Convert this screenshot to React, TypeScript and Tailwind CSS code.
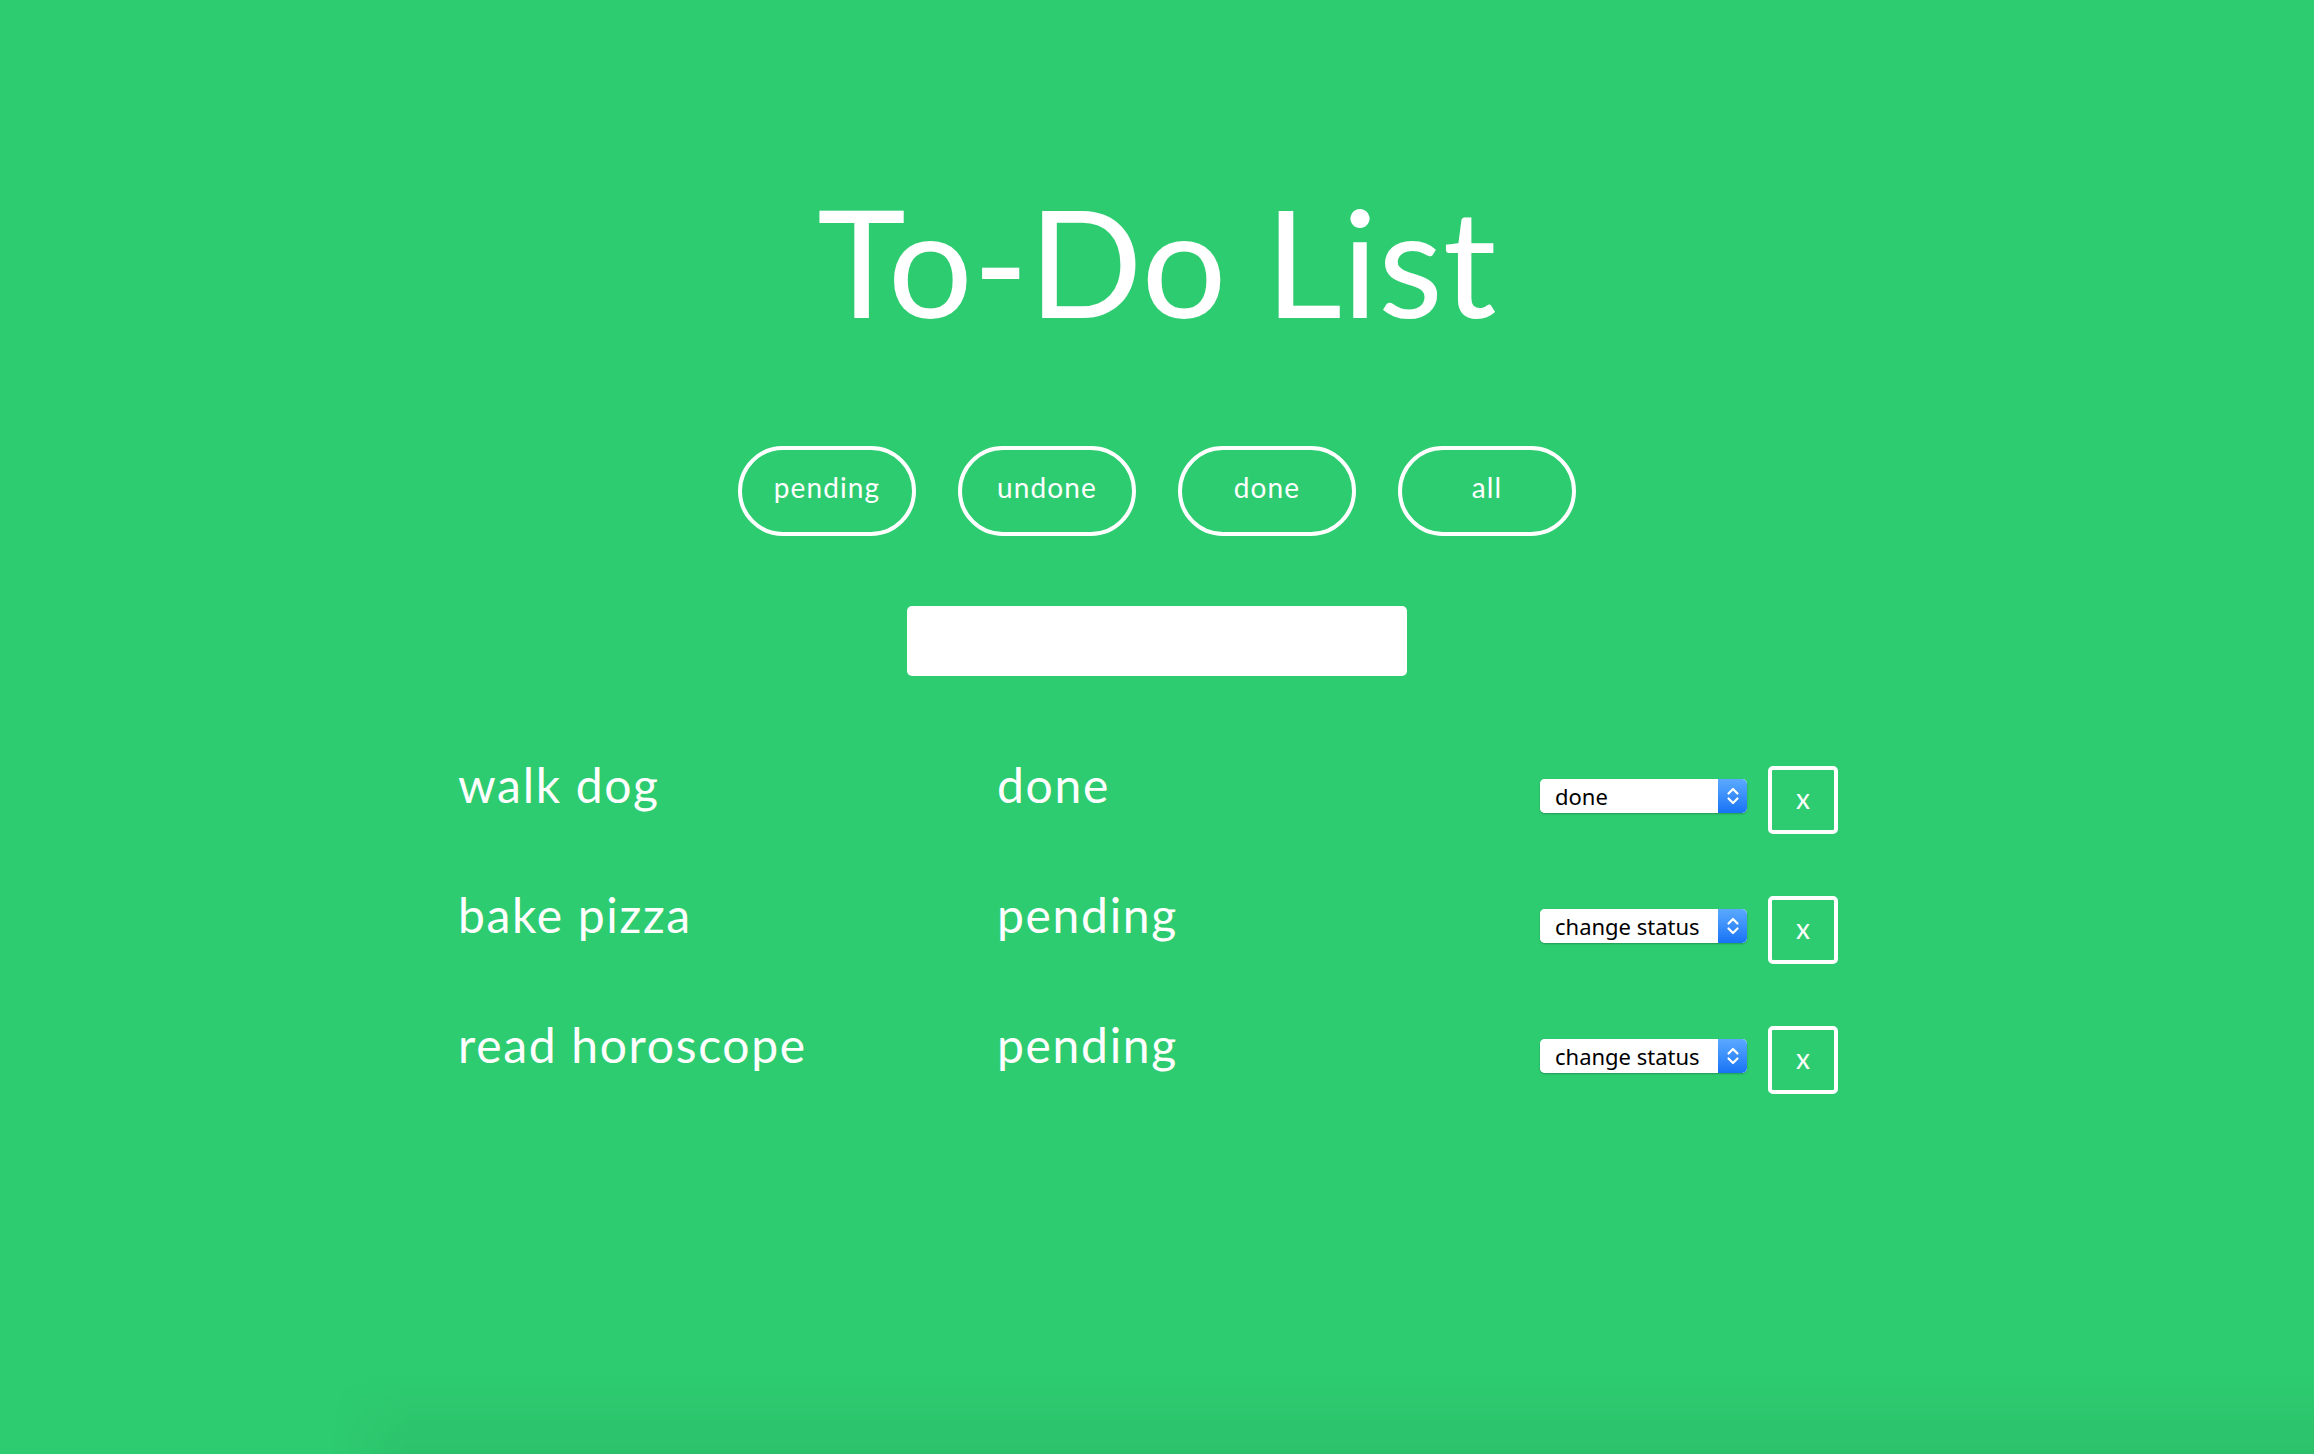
import { useState } from 'react';

{/* To-Do list page | title, filter pills, new-item input, item rows */}

type Todo = { name: string; status: string; choice: string };

const filters = ['pending', 'undone', 'done', 'all'];

const initial: Todo[] = [
  { name: 'walk dog', status: 'done', choice: 'done' },
  { name: 'bake pizza', status: 'pending', choice: 'change status' },
  { name: 'read horoscope', status: 'pending', choice: 'change status' },
];

function StatusSelect({ value }: { value: string }) {
  return (
    <div className="relative mt-[13px] w-[207px] h-[34px] rounded-[5px] bg-white shadow-[0_1px_2px_rgba(0,0,0,0.25)] overflow-hidden">
      <select
        defaultValue={value}
        className="appearance-none w-full h-full bg-white pl-[15px] pr-[34px] text-[22px] text-black outline-none"
        style={{ fontFamily: '"Noto Sans", "Liberation Sans", sans-serif' }}
      >
        <option>change status</option>
        <option>done</option>
        <option>undone</option>
        <option>pending</option>
      </select>
      <div className="pointer-events-none absolute right-0 top-0 h-full w-[29px] bg-gradient-to-b from-[#5aa9ff] to-[#1673f5] flex items-center justify-center">
        <svg width="14" height="20" viewBox="0 0 14 20" fill="none" stroke="white" strokeWidth="2.2" strokeLinecap="round" strokeLinejoin="round">
          <path d="M2.5 7.5 L7 3 L11.5 7.5" />
          <path d="M2.5 12.5 L7 17 L11.5 12.5" />
        </svg>
      </div>
    </div>
  );
}

export default function App() {
  const [todos] = useState(initial);

  return (
    <div
      className="flex flex-col h-screen bg-[#2ecc71] text-white overflow-hidden"
      style={{ fontFamily: 'Lato, "Open Sans", sans-serif' }}
    >
      <h1 className="mt-[185px] text-center text-[150px] leading-none font-normal">To-Do List</h1>

      <div className="mt-[111px] flex justify-center gap-[42px]">
        {filters.map((f) => (
          <button
            key={f}
            className="w-[178px] h-[90px] rounded-full border-4 border-white flex items-center justify-center pb-[8px] text-[28px] tracking-[0.04em] text-white"
          >
            {f}
          </button>
        ))}
      </div>

      <div className="mt-[70px] flex justify-center">
        <input type="text" className="w-[500px] h-[70px] rounded-[5px] bg-white outline-none px-4 text-black text-2xl" />
      </div>

      <div className="mt-[90px] mx-auto w-[1398px] flex flex-col">
        {todos.map((t) => (
          <div key={t.name} className="flex items-start h-[130px]">
            <span className="w-[542px] -mt-[5px] text-[48px] leading-none tracking-[0.035em]">{t.name}</span>
            <span className="w-[540px] -mt-[5px] -ml-[3px] text-[48px] leading-none tracking-[0.035em]">{t.status}</span>
            <div className="ml-[3px]">
              <StatusSelect value={t.choice} />
            </div>
            <button className="ml-[21px] w-[70px] h-[68px] rounded-[5px] border-4 border-white flex items-center justify-center pb-[4px] text-[28px] text-white">
              x
            </button>
          </div>
        ))}
      </div>

      <div className="mt-auto ml-[330px] h-[80px] bg-gradient-to-b from-transparent to-[rgba(0,0,0,0.05)] [mask-image:linear-gradient(to_right,transparent,black_80px)]" />
    </div>
  );
}
